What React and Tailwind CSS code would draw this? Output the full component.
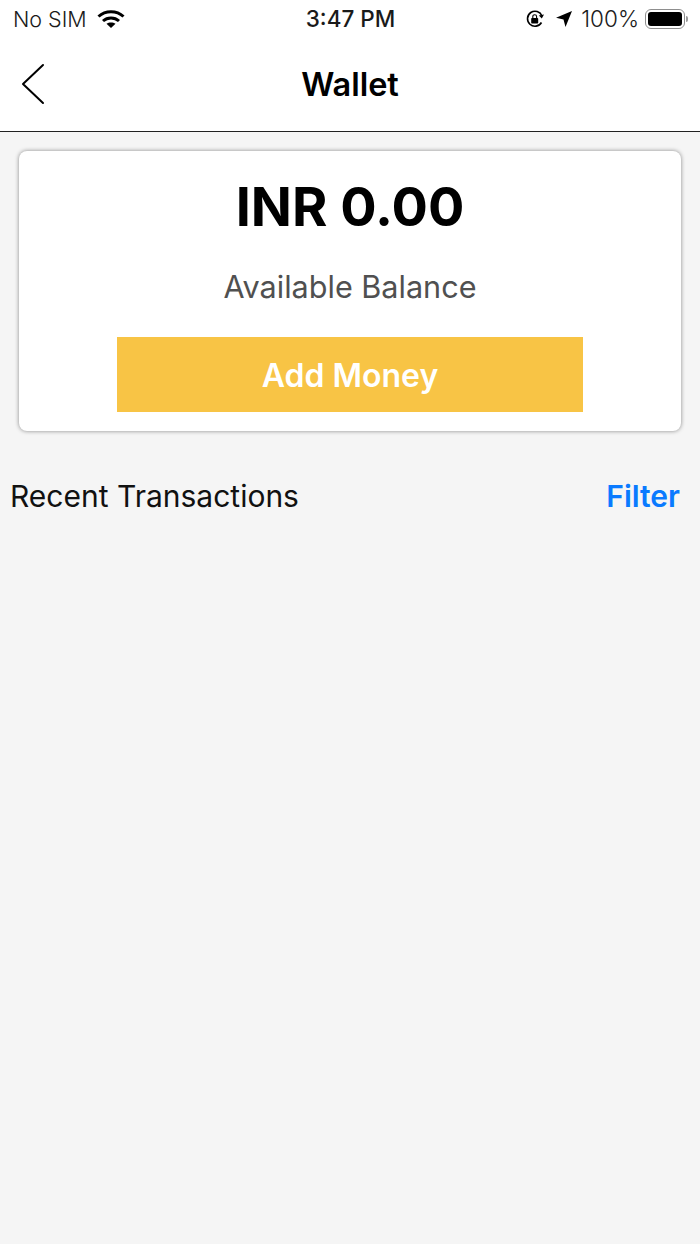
import React from "react";

const WifiIcon = () => (
    <svg width="28" height="20" viewBox="0 0 28 20" fill="none" stroke="#000" strokeWidth="3">
        <path d="M1.5 7.5 C8.5 1 19.5 1 26.5 7.5" />
        <path d="M6 12 C10.5 8 17.5 8 22 12" />
        <path d="M14 19 L9.5 14.8 C12 13 16 13 18.5 14.8 Z" fill="#000" stroke="none" />
    </svg>
);

const LockIcon = () => (
    <svg width="20" height="20" viewBox="0 0 20 20" fill="none">
        <path d="M16.5 13.5 A7.5 7.5 0 1 1 17 7" stroke="#000" strokeWidth="1.6" />
        <path d="M19 5.5 L16.8 9.4 L13.8 6.4 Z" fill="#000" />
        <rect x="6.2" y="9" width="7" height="5.5" rx="0.8" fill="#000" />
        <path d="M7.8 9 V7.6 a1.9 1.9 0 0 1 3.8 0 V9" stroke="#000" strokeWidth="1.1" />
    </svg>
);

const LocationIcon = () => (
    <svg width="18" height="18" viewBox="0 0 18 18">
        <path d="M17 1 L10.5 17 L8.5 9.5 L1 7.8 Z" fill="#000" />
    </svg>
);

const Battery = () => (
    <div className="flex items-center gap-[1px]">
        <div className="w-[40px] h-[20px] rounded-[6px] border border-[#8e8e8e] p-[2px]">
            <div className="w-full h-full rounded-[3px] bg-black" />
        </div>
        <div className="w-[2px] h-[6px] rounded-r-sm bg-[#9a9a9a]" />
    </div>
);

const App = () => {
    return (
        <div className="w-[700px] h-[1244px] flex flex-col bg-[#f5f5f5] font-['Inter','Liberation_Sans',sans-serif]">
            {/* status bar */}
            <div className="h-[38px] bg-white flex items-center pl-[13px] pr-[12px] text-[#1a1a1a]">
                <div className="flex-1 basis-0 flex items-center gap-[10px] text-[21.5px] font-light">
                    <span>No SIM</span>
                    <WifiIcon />
                </div>
                <span className="text-[22.5px] font-medium">3:47 PM</span>
                <div className="flex-1 basis-0 flex items-center justify-end text-[22.5px] font-light">
                    <LockIcon />
                    <div className="ml-[10px] mr-[8px]">
                        <LocationIcon />
                    </div>
                    <span className="mr-[6px]">100%</span>
                    <Battery />
                </div>
            </div>

            {/* header */}
            <div className="relative h-[94px] bg-white border-b border-[#222] flex items-center justify-center">
                <button className="absolute left-[21px] top-[25px]">
                    <svg width="24" height="42" viewBox="0 0 24 42" fill="none" stroke="#000" strokeWidth="2" strokeLinecap="round" strokeLinejoin="round">
                        <path d="M22 2 L2 21 L22 40" />
                    </svg>
                </button>
                <h1 className="pt-[2px] text-[32.5px] font-semibold text-black">Wallet</h1>
            </div>

            {/* balance card */}
            <div className="mx-[19px] mt-[19px] h-[280px] bg-white rounded-[8px] shadow-[0_0_4px_rgba(0,0,0,0.45)] flex flex-col items-center">
                <div className="mt-[21px] text-[54px] leading-[70px] font-bold text-black">INR 0.00</div>
                <div className="mt-[26px] text-[30.6px] leading-[38px] text-[#505050]">Available Balance</div>
                <button className="mt-[31px] pt-[2px] w-[466px] h-[75px] bg-[#f8c445] text-white text-[32px] font-semibold">Add Money</button>
            </div>

            {/* recent transactions */}
            <div className="mt-[43px] pl-[10px] pr-[20px] flex items-center justify-between text-[30px] leading-[44px]">
                <span className="text-[#111]">Recent Transactions</span>
                <span className="text-[#0a7aff] font-semibold">Filter</span>
            </div>
        </div>
    );
};

export default App;
